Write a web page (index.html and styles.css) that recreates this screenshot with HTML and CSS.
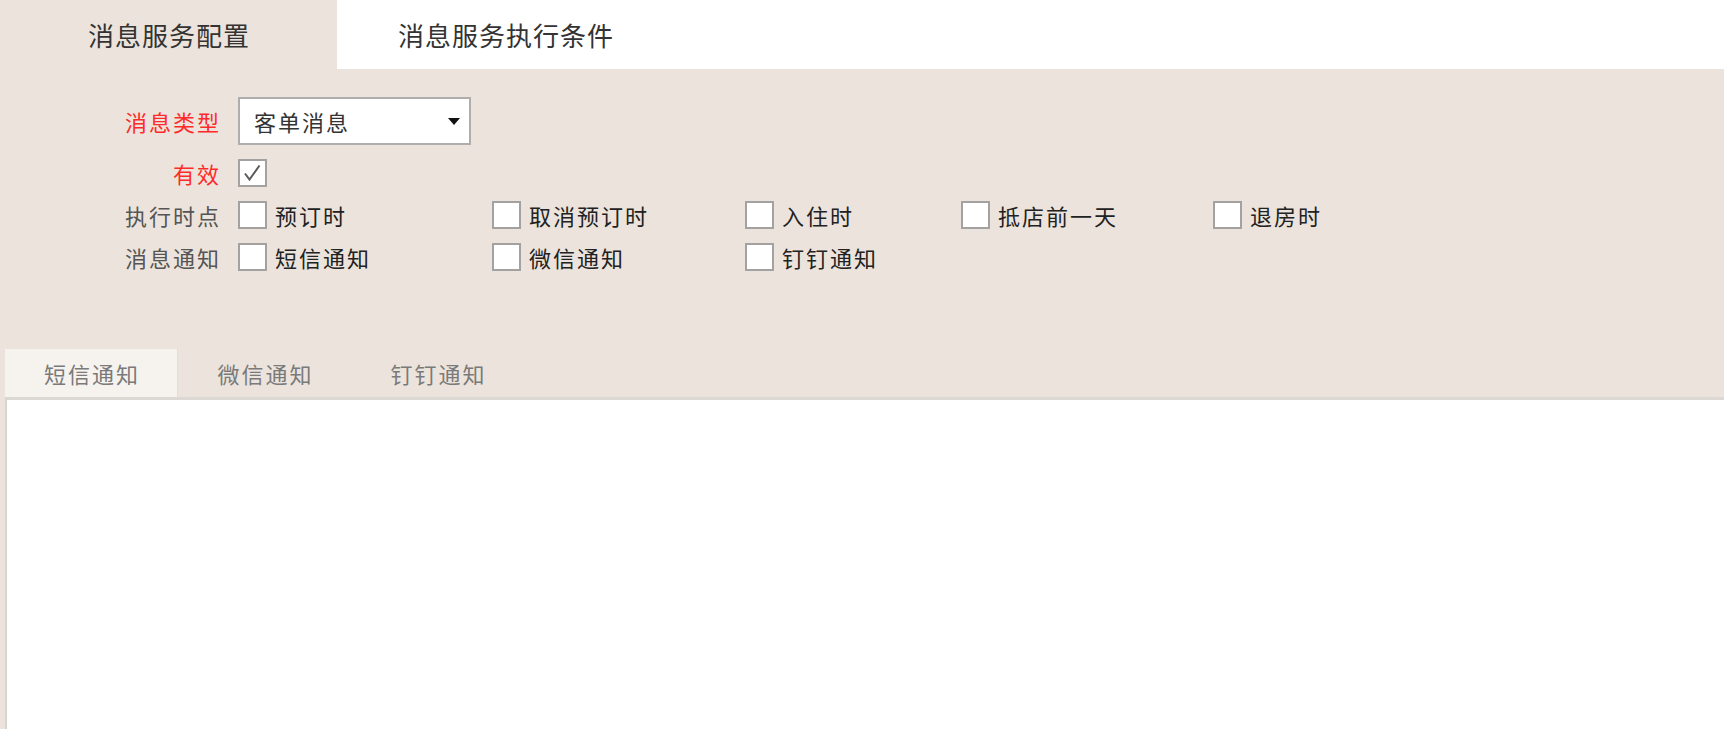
FILE: index.html
```html
<!DOCTYPE html>
<html lang="zh-CN">
<head>
<meta charset="utf-8">
<title>消息服务配置</title>
<link rel="stylesheet" href="styles.css">
</head>
<body>
<div class="page">
  <div class="topbar">
    <div class="toptab active">消息服务配置</div>
    <div class="toptab">消息服务执行条件</div>
  </div>

  <div class="form">
    <div class="row">
      <div class="label req">消息类型</div>
      <div class="select">
        <span>客单消息</span>
        <span class="arrow"></span>
      </div>
    </div>
    <div class="row">
      <div class="label req">有效</div>
      <div class="cb">
        <svg width="25" height="24" viewBox="0 0 25 24"><polyline points="5,12.5 9.5,18.5 19.5,4.5" fill="none" stroke="#5a5a5a" stroke-width="2"/></svg>
      </div>
    </div>
    <div class="row">
      <div class="label">执行时点</div>
      <div class="opts">
        <div class="opt"><span class="cb"></span><span class="opt-text">预订时</span></div>
        <div class="opt"><span class="cb"></span><span class="opt-text">取消预订时</span></div>
        <div class="opt"><span class="cb"></span><span class="opt-text">入住时</span></div>
        <div class="opt"><span class="cb"></span><span class="opt-text">抵店前一天</span></div>
        <div class="opt"><span class="cb"></span><span class="opt-text">退房时</span></div>
      </div>
    </div>
    <div class="row">
      <div class="label">消息通知</div>
      <div class="opts">
        <div class="opt"><span class="cb"></span><span class="opt-text">短信通知</span></div>
        <div class="opt"><span class="cb"></span><span class="opt-text">微信通知</span></div>
        <div class="opt"><span class="cb"></span><span class="opt-text">钉钉通知</span></div>
      </div>
    </div>
  </div>

  <div class="lower">
    <div class="subtabs">
      <div class="subtab active">短信通知</div>
      <div class="subtab">微信通知</div>
      <div class="subtab">钉钉通知</div>
    </div>
    <div class="panel"></div>
  </div>
</div>
</body>
</html>
```

FILE: styles.css
```css
html, body {
  margin: 0;
  padding: 0;
}
body {
  background: #ece4dc;
  font-family: "Noto Sans CJK SC", "Noto Sans", sans-serif;
  color: #2a2a2a;
}
.page {
  display: flex;
  flex-direction: column;
  height: 100vh;
}
.topbar {
  display: flex;
  height: 69px;
  background: #ffffff;
  flex: none;
}
.toptab {
  width: 336px;
  display: flex;
  align-items: center;
  justify-content: center;
  font-size: 26px;
  letter-spacing: 1px;
  color: #333;
  padding-left: 1px;
}
.toptab.active {
  background: #ece4dc;
}
.form {
  display: flex;
  flex-direction: column;
  gap: 14px;
  padding-top: 28px;
  flex: none;
}
.row {
  display: flex;
  align-items: center;
}
.label {
  width: 221px;
  text-align: right;
  font-size: 22px;
  letter-spacing: 2px;
  color: #555;
  line-height: 28px;
  margin-right: 17px;
}
.label.req {
  color: #ff2a2a;
}
.select {
  width: 233px;
  height: 48px;
  box-sizing: border-box;
  border: 2px solid #b0aeac;
  background: #fff;
  display: flex;
  align-items: center;
  justify-content: space-between;
  padding: 0 9px 0 14px;
  font-size: 22px;
  letter-spacing: 2px;
  color: #333;
}
.arrow {
  width: 0;
  height: 0;
  border-left: 6px solid transparent;
  border-right: 6px solid transparent;
  border-top: 7px solid #111;
}
.cb {
  width: 29px;
  height: 28px;
  box-sizing: border-box;
  border: 2px solid #a4a2a0;
  background: #fff;
  display: block;
  flex: none;
}
.cb svg {
  display: block;
}
.opts {
  display: grid;
  grid-template-columns: 254px 253px 216px 252px auto;
}
.opt {
  display: flex;
  align-items: center;
  gap: 8px;
}
.opt-text {
  font-size: 22px;
  letter-spacing: 2px;
  color: #222;
  line-height: 28px;
}
.lower {
  margin-top: 78px;
  display: flex;
  flex-direction: column;
  flex: 1;
  padding-left: 5px;
}
.subtabs {
  display: flex;
  height: 48px;
  flex: none;
}
.subtab {
  width: 173px;
  display: flex;
  align-items: center;
  justify-content: center;
  font-size: 22px;
  letter-spacing: 2px;
  color: #7a7a7a;
  padding-left: 2px;
  box-sizing: border-box;
}
.subtab.active {
  background: #f6f3ef;
  border-right: 1px solid #e4ded8;
}
.panel {
  flex: 1;
  background: #fff;
  border-top: 3px solid #dcd8d4;
  border-left: 2px solid #d8d4d0;
}
```
